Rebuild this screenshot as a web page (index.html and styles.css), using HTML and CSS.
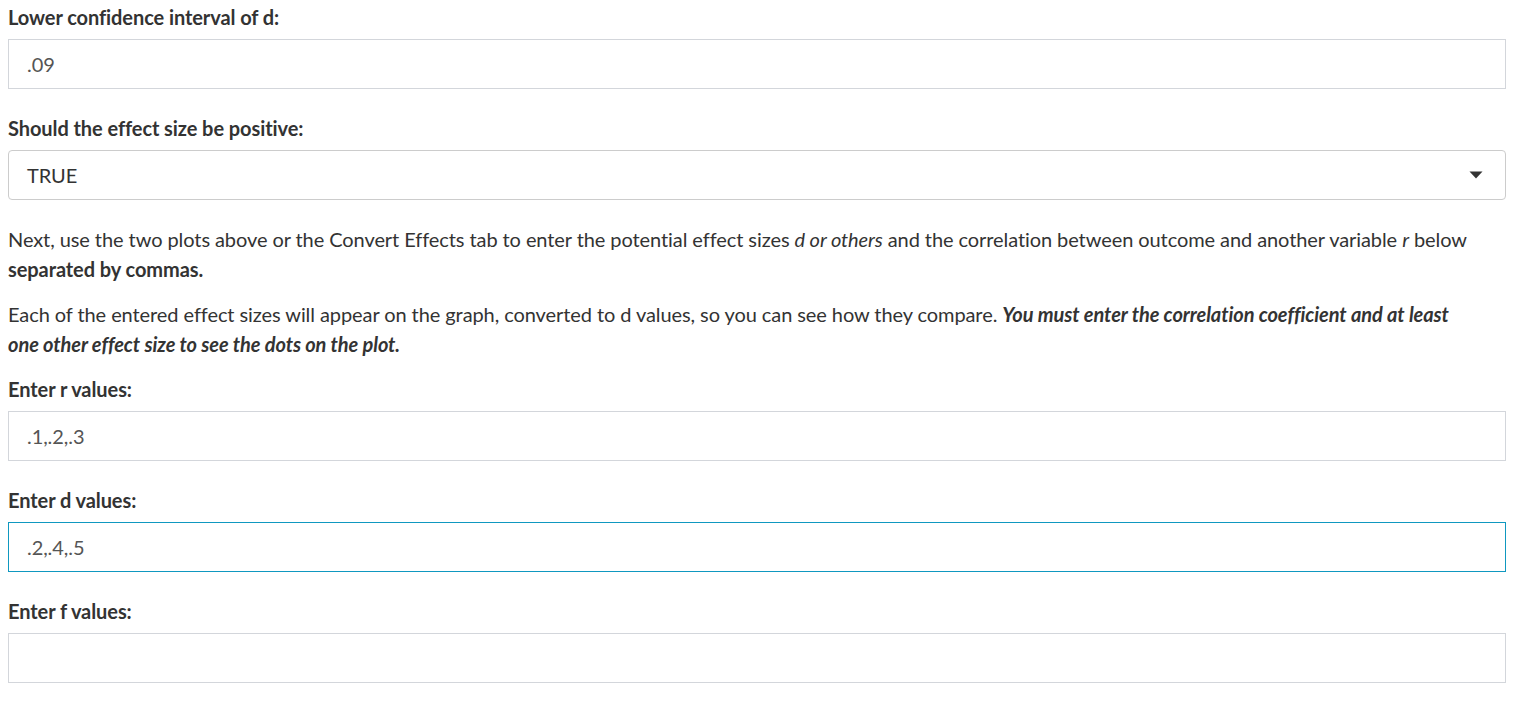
FILE: index.html
```html
<!DOCTYPE html>
<html>
<head>
<meta charset="utf-8">
<link rel="stylesheet" href="styles.css">
</head>
<body>
<div class="panel">
  <div class="form-group">
    <label class="control-label">Lower confidence interval of d:</label>
    <input class="form-control" type="text" value=".09">
  </div>
  <div class="form-group">
    <label class="control-label">Should the effect size be positive:</label>
    <div class="select-box">
      <span class="select-value">TRUE</span>
      <svg class="caret" width="14" height="8" viewBox="0 0 14 8"><path d="M0.5 0.5 H13.5 L7 7.5 Z" fill="#333"/></svg>
    </div>
  </div>
  <p class="text">Next, use the two plots above or the Convert Effects tab to enter the potential effect sizes <em>d or others</em> and the correlation between outcome and another variable <em>r</em> below <strong>separated by commas.</strong></p>
  <p class="text">Each of the entered effect sizes will appear on the graph, converted to d values, so you can see how they compare. <strong><em>You must enter the correlation coefficient and at least one other effect size to see the dots on the plot.</em></strong></p>
  <div class="form-group">
    <label class="control-label">Enter r values:</label>
    <input class="form-control" type="text" value=".1,.2,.3">
  </div>
  <div class="form-group">
    <label class="control-label">Enter d values:</label>
    <input class="form-control focused" type="text" value=".2,.4,.5">
  </div>
  <div class="form-group">
    <label class="control-label">Enter f values:</label>
    <input class="form-control" type="text" value="">
  </div>
</div>
</body>
</html>
```

FILE: styles.css
```css
html, body {
  margin: 0;
  padding: 0;
  background: #ffffff;
}
body {
  font-family: Lato, "Open Sans", "Liberation Sans", sans-serif;
  font-size: 20px;
  line-height: 30px;
  color: #333333;
  letter-spacing: -0.08px;
}
.panel {
  padding: 2px 12px 0 8px;
}
.form-group {
  display: flex;
  flex-direction: column;
  margin-bottom: 24px;
}
.control-label {
  display: block;
  font-weight: 700;
  margin-bottom: 7px;
  color: #333333;
}
.form-control {
  display: block;
  box-sizing: border-box;
  width: 100%;
  height: 50px;
  margin: 0;
  padding: 9px 18px;
  font-family: inherit;
  font-size: 20px;
  line-height: 30px;
  letter-spacing: inherit;
  color: #555555;
  background: #ffffff;
  border: 1px solid #d3d6db;
  border-radius: 0;
  outline: none;
}
.form-control.focused {
  border-color: #0f98c0;
}
.select-box {
  box-sizing: border-box;
  height: 50px;
  display: flex;
  align-items: center;
  justify-content: space-between;
  padding: 9px 22px 9px 18px;
  border: 1px solid #cccccc;
  border-radius: 4px;
  background: #ffffff;
  color: #333333;
}
.select-value {
  line-height: 30px;
}
.caret {
  display: block;
}
.text {
  margin: 0 0 15px 0;
  max-width: 1468px;
}
```
